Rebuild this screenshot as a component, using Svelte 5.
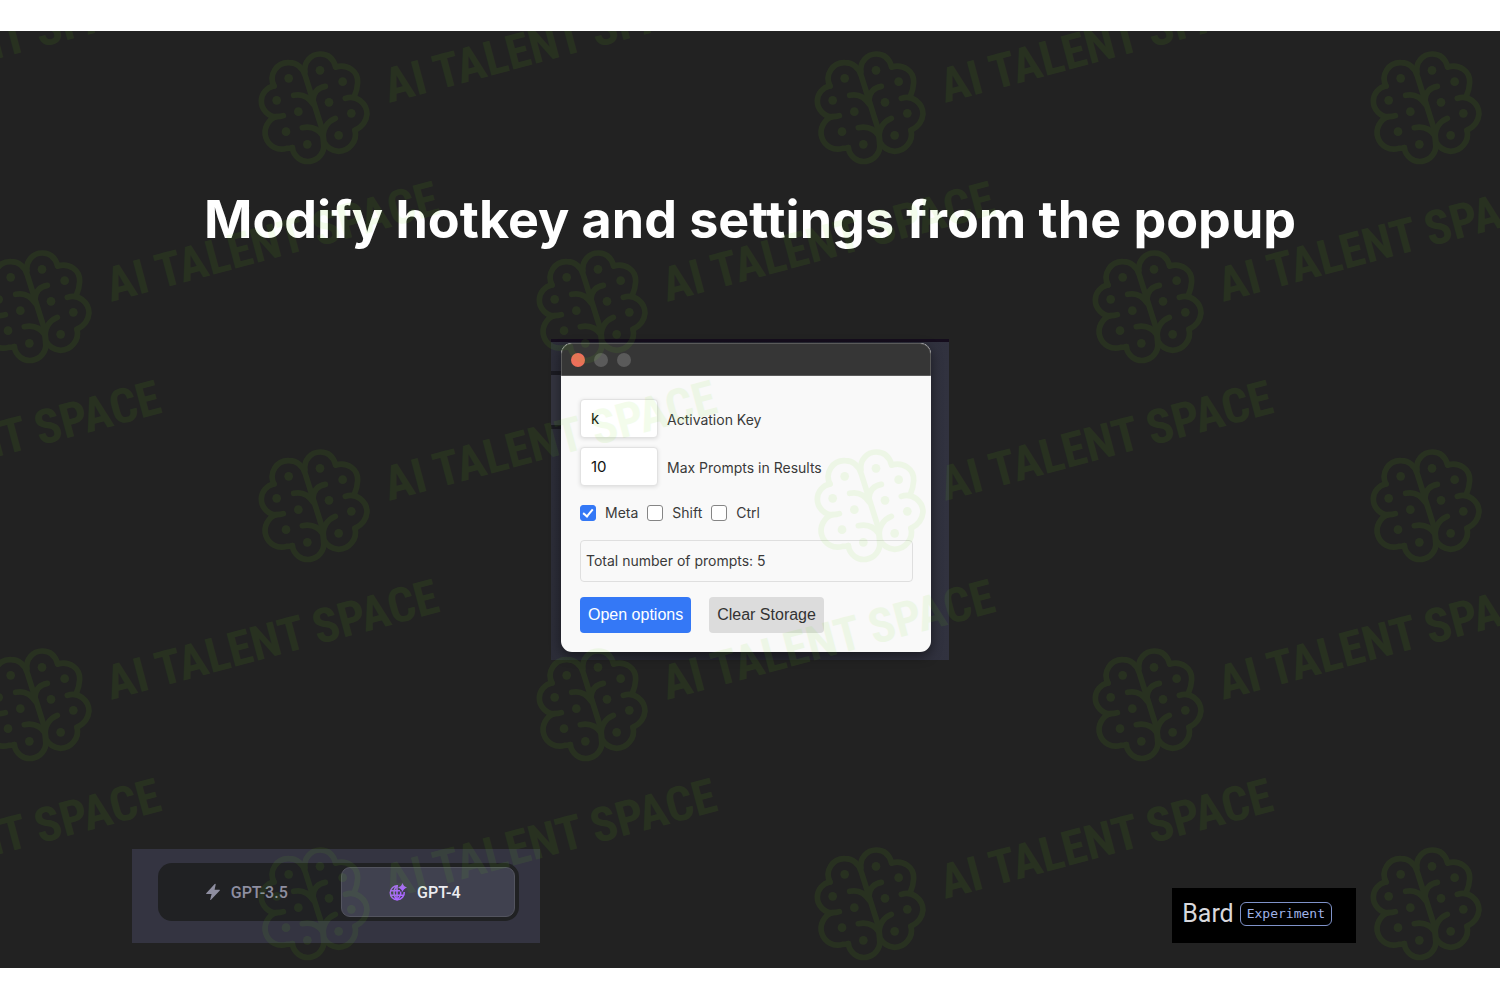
<script>
  let activationKey = $state('k');
  let maxPrompts = $state('10');
  let modifiers = $state([
    { name: 'Meta', on: true },
    { name: 'Shift', on: false },
    { name: 'Ctrl', on: false }
  ]);
  let model = $state('GPT-4');

  const marks = [];
  for (let row = 0; row < 5; row++) {
    for (let col = -1; col < 3; col++) {
      marks.push({ x: (row % 2 ? 36 : 314) + col * 556, y: 108 + row * 199 });
    }
  }

  const dots = [
    [102, 112], [196, 88], [264, 122], [66, 178], [223, 184],
    [131, 212], [290, 217], [94, 272], [252, 283], [158, 310]
  ];
</script>

<main class="page">
  <section class="slide">
    <header class="heading">
      <h1>Modify hotkey and settings from the popup</h1>
    </header>

    <div class="backdrop">
      <div class="side-lines"></div>
      <div class="window">
        <div class="titlebar">
          <span class="light close"></span>
          <span class="light"></span>
          <span class="light"></span>
        </div>
        <form class="body" onsubmit={(e) => e.preventDefault()}>
          <div class="field">
            <input id="key" type="text" bind:value={activationKey} />
            <label for="key">Activation Key</label>
          </div>
          <div class="field">
            <input id="max" type="text" bind:value={maxPrompts} />
            <label for="max">Max Prompts in Results</label>
          </div>
          <div class="modifiers">
            {#each modifiers as m}
              <label><input type="checkbox" bind:checked={m.on} />{m.name}</label>
            {/each}
          </div>
          <p class="total">Total number of prompts: 5</p>
          <div class="actions">
            <button type="button" class="primary">Open options</button>
            <button type="button" class="secondary">Clear Storage</button>
          </div>
        </form>
      </div>
    </div>

    <footer class="footer">
      <div class="models">
        <div class="switch">
          <button type="button" class:selected={model === 'GPT-3.5'} onclick={() => (model = 'GPT-3.5')}>
            <svg class="bolt" viewBox="0 0 16 18" aria-hidden="true">
              <path d="M9.7 1 1.2 10.2Q.8 10.9 1.6 10.9H6.6L5.2 16.4Q5.3 17.3 6 16.8L14.8 7.6Q15.2 6.8 14.4 6.7H9.6L10.7 1.6Q10.6.4 9.7 1Z" />
            </svg>
            GPT-3.5
          </button>
          <button type="button" class:selected={model === 'GPT-4'} onclick={() => (model = 'GPT-4')}>
            <svg class="globe" viewBox="0 0 18 18" aria-hidden="true">
              <g fill="none" stroke="currentColor" stroke-width="1.5">
                <path d="M9 2.800A7 7 0 1 0 15.200 9" />
                <path d="M8 2.800C4 6 4 13 8 16.800C12 13 12 10.500 11.600 8.500" />
                <path d="M1.500 7.700H11M1.500 12.200H14.500" />
                <path d="M8 2.800V16.800" />
              </g>
              <path fill="currentColor" d="M13.500 0Q14.500 3.500 18 4.500Q14.500 5.500 13.500 9Q12.500 5.500 9 4.500Q12.500 3.500 13.500 0Z" />
            </svg>
            GPT-4
          </button>
        </div>
      </div>
      <div class="bard">
        <span class="bard-name">Bard</span>
        <span class="badge">Experiment</span>
      </div>
    </footer>

    <svg class="watermark" viewBox="0 31 1500 937" preserveAspectRatio="xMidYMid slice" aria-hidden="true">
      <defs>
        <g id="brain" transform="scale(.3333) translate(-178 -201)">
          <g fill="none" stroke="#6edc14" stroke-width="17" stroke-linecap="round">
            <path d="M58 135A48 48 0 0 1 103 65C128 65 145 82 152 105L204 270Q207 290 207 308" />
            <path d="M58 135A46 46 0 0 0 20 180C20 206 42 228 66 227Q78 227 86 224" />
            <path d="M66 227A48 48 0 0 0 96 322Q106 322 113 320" />
            <path d="M113 320A46 46 0 0 0 207 308" />
            <path d="M151 92A46 46 0 0 1 197 39C220 39 236 52 243 78" />
            <path d="M243 78C278 68 311 90 309 125Q308 145 299 166" />
            <path d="M272 172C305 160 337 188 337 219Q334 252 301 268" />
            <path d="M301 268C309 300 283 331 252 331Q222 329 207 302Q202 275 214 255Q224 239 242 232" />
            <path d="M117 163Q154 155 176 190M212 136Q178 142 175 176M143 260Q184 252 205 285" />
          </g>
          <g fill="#6edc14">
            {#each dots as [cx, cy]}
              <circle {cx} {cy} r="13" />
            {/each}
          </g>
        </g>
      </defs>
      {#each marks as m}
        <g transform="translate({m.x} {m.y})">
          <use href="#brain" />
          <text transform="translate(75 -5) rotate(-15)">AI TALENT SPACE</text>
        </g>
      {/each}
    </svg>
  </section>
</main>

<style>
  :global(body) {
    margin: 0;
    background: #fff;
  }
  .page {
    box-sizing: border-box;
    min-height: 100vh;
    padding-bottom: 1px;
    display: grid;
    align-items: center;
    font-family: Inter, "Liberation Sans", sans-serif;
  }
  .slide {
    position: relative;
    display: grid;
    grid-template-rows: 1fr auto 1fr;
    aspect-ratio: 1500 / 937;
    background: #222;
    overflow: hidden;
  }
  .heading {
    display: grid;
    place-items: center;
    padding-top: 70px;
  }
  h1 {
    margin: 0;
    color: #fff;
    font: 700 52px/64px Inter, "Liberation Sans", sans-serif;
    text-align: center;
  }
  .backdrop {
    position: relative;
    justify-self: center;
    box-sizing: border-box;
    width: 398px;
    padding: 4px 18px 8px 10px;
    background: linear-gradient(90deg, #2c2d38, #262731 50%, #31323f);
    box-shadow: inset 0 3px #150d1d;
  }
  .side-lines {
    position: absolute;
    left: 0;
    top: 32px;
    width: 10px;
    height: 50px;
    border: solid #1b1b21;
    border-width: 4px 0;
    background: #33343f;
  }
  .window {
    position: relative;
    border-radius: 11px;
    overflow: hidden;
    background: #f9f9f9;
    box-shadow: 0 4px 12px rgb(0 0 0 / 45%);
  }
  .titlebar {
    display: flex;
    align-items: center;
    gap: 9px;
    box-sizing: border-box;
    height: 33px;
    padding: 0 9px;
    background: #363636;
    border: 1px solid #5a5a5a;
    border-radius: 11px 11px 0 0;
  }
  .light {
    width: 14px;
    height: 14px;
    border-radius: 50%;
    background: #5a5a5a;
  }
  .close {
    background: #ed6f5a;
  }
  .body {
    padding: 23px 18px 19px 19px;
    color: #3a3a3a;
    font-size: 14px;
    line-height: 20px;
  }
  .field {
    display: flex;
    align-items: center;
    gap: 9px;
    margin-bottom: 9px;
  }
  .field label {
    padding-top: 2px;
  }
  .field input {
    box-sizing: border-box;
    width: 78px;
    height: 39px;
    padding: 0 10px;
    border: 1px solid #e2e2e2;
    border-radius: 4px;
    background: #fff;
    box-shadow: 0 1px 4px rgb(0 0 0 / 12%);
    color: #111;
    font: 15px Inter, sans-serif;
  }
  .modifiers {
    display: flex;
    gap: 9px;
    margin: 17px 0;
  }
  .modifiers label {
    display: flex;
    align-items: center;
    gap: 9px;
  }
  .modifiers input {
    appearance: none;
    box-sizing: border-box;
    width: 16px;
    height: 16px;
    margin: 0;
    border: 1px solid #858585;
    border-radius: 3px;
    background: #fff;
    display: grid;
    place-items: center;
  }
  .modifiers input:checked {
    border-color: #3478f6;
    background: #3478f6;
  }
  .modifiers input:checked::after {
    content: "";
    width: 4px;
    height: 8px;
    margin-bottom: 2px;
    border: solid #fff;
    border-width: 0 2px 2px 0;
    transform: rotate(40deg);
  }
  .total {
    margin: 0 0 15px;
    padding: 10px 5px;
    border: 1px solid #dfdfdf;
    border-radius: 4px;
  }
  .actions {
    display: flex;
    gap: 18px;
  }
  .actions button {
    height: 36px;
    padding: 0 8px;
    border: 0;
    border-radius: 4px;
    font: 16px "Liberation Sans", sans-serif;
  }
  .primary {
    background: #3478f6;
    color: #fff;
  }
  .secondary {
    background: #dcdcdc;
    color: #333;
  }
  .footer {
    display: flex;
    justify-content: space-between;
    align-items: flex-end;
    padding: 0 144px 25px 132px;
  }
  .models {
    padding: 14px 21px 22px 26px;
    background: #343441;
  }
  .switch {
    display: grid;
    grid-template-columns: 1fr 1fr;
    gap: 4px;
    width: 353px;
    padding: 4px;
    border-radius: 14px;
    background: #202123;
  }
  .switch button {
    display: flex;
    align-items: center;
    justify-content: center;
    gap: 10px;
    height: 50px;
    padding: 0 6px 0 0;
    border: 1px solid transparent;
    border-radius: 9px;
    background: none;
    color: #8e8ea0;
    font: 500 16px Roboto, "Liberation Sans", sans-serif;
  }
  .switch .selected {
    border-color: #53545f;
    background: #40414f;
    color: #ececf1;
  }
  .bolt {
    width: 16px;
    height: 18px;
    fill: currentColor;
  }
  .globe {
    width: 18px;
    height: 18px;
    color: #ab68ff;
  }
  .bard {
    display: flex;
    align-items: center;
    gap: 6px;
    box-sizing: border-box;
    height: 55px;
    padding: 0 24px 4px 10px;
    background: #000;
  }
  .bard-name {
    color: #d8d8dc;
    font: 25px Roboto, sans-serif;
  }
  .badge {
    padding: 3px 6px;
    border: 1px solid #7f92c9;
    border-radius: 6px;
    color: #9fb2e8;
    font: 13px/16px "DejaVu Sans Mono", monospace;
  }
  .watermark {
    position: absolute;
    inset: 0;
    width: 100%;
    height: 100%;
    opacity: 0.08;
    pointer-events: none;
  }
  .watermark text {
    fill: #6edc14;
    font: 700 48px "Roboto Condensed", sans-serif;
  }
</style>
